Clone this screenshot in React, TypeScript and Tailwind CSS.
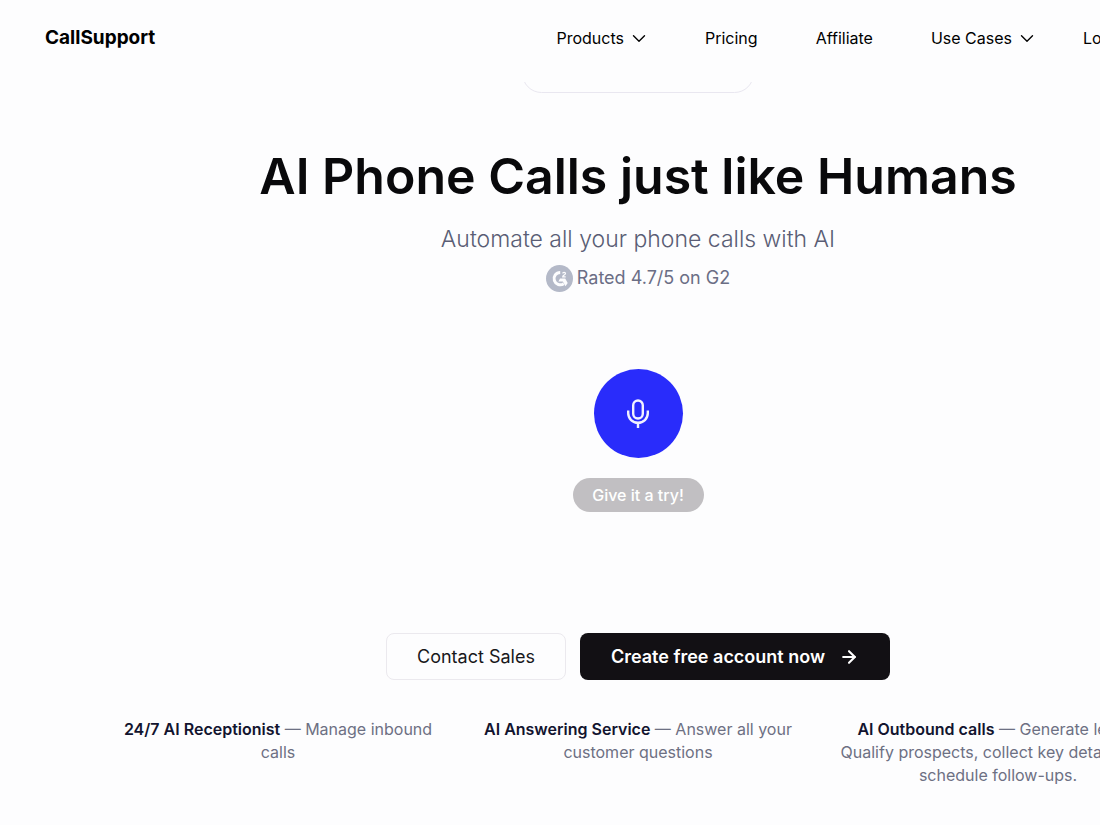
import { ArrowRight } from 'lucide-react';

const navLinks = [
  { label: 'Products', menu: true },
  { label: 'Pricing', menu: false },
  { label: 'Affiliate', menu: false },
  { label: 'Use Cases', menu: true },
];

const features = [
  { title: '24/7 AI Receptionist', text: 'Manage inbound calls' },
  { title: 'AI Answering Service', text: 'Answer all your customer questions' },
  {
    title: 'AI Outbound calls',
    text: 'Generate leads, Qualify prospects, collect key details, and schedule follow-ups.',
  },
];

function G2Logo() {
  return (
    <svg viewBox="0 0 27 27" className="h-[27px] w-[27px]" aria-hidden="true">
      <circle cx="13.5" cy="13.5" r="13.5" fill="#b4b9c8" />
      <path
        d="M14.2 7.4a6.2 6.2 0 1 0 3.6 11.3"
        fill="none"
        stroke="#fdfdfe"
        strokeWidth="3"
      />
      <path d="M14 13.6h5.2l2.5 4.4-2.2 3.2-2.7-4.7h-4.4z" fill="#fdfdfe" />
      <path
        d="M16.6 8.4c.3-1.5 2.9-1.4 2.9.2 0 1.3-2.8 1.7-2.8 3.2h3"
        fill="none"
        stroke="#fdfdfe"
        strokeWidth="1.2"
      />
    </svg>
  );
}

function MicIcon() {
  return (
    <svg
      viewBox="0 0 24 30"
      className="h-[30px] w-6"
      fill="none"
      stroke="#f1f1ff"
      strokeWidth="2.4"
      aria-hidden="true"
    >
      <rect x="7.2" y="1.5" width="9.6" height="18" rx="4.8" />
      <path d="M2.2 11.5v2.8a9.8 9.5 0 0 0 19.6 0v-2.8M12 24v5" />
    </svg>
  );
}

function Chevron() {
  return (
    <svg
      viewBox="0 0 16 16"
      className="h-4 w-4"
      fill="none"
      stroke="currentColor"
      strokeWidth="1.4"
      strokeLinecap="round"
      strokeLinejoin="round"
      aria-hidden="true"
    >
      <path d="M2.5 5.8 8 11.2l5.5-5.4" />
    </svg>
  );
}

function Header() {
  return (
    <header className="relative z-10 flex h-[82px] items-center bg-[#fdfdfe] px-[45px] pb-1.5 text-base text-black">
      <a href="#" className="text-[19px] font-bold">
        CallSupport
      </a>
      <nav className="ml-auto flex items-center gap-[58px]">
        {navLinks.map((link) => (
          <a key={link.label} href="#" className="flex items-center gap-[7px]">
            {link.label}
            {link.menu && <Chevron />}
          </a>
        ))}
      </nav>
      <div className="ml-12 w-[148px]">
        <a href="#">Login</a>
      </div>
    </header>
  );
}

export default function App() {
  return (
    <div className="min-h-screen overflow-x-hidden bg-[#fdfdfe] font-['Inter',sans-serif]">
      <div className="min-w-[1276px]">
        <Header />

        <main className="flex flex-col items-center text-center">
          {/* Announcement pill, tucked under the header */}
          <div className="-mt-7 h-[39px] w-[232px] rounded-[20px] border border-[#e9e7f0]"></div>

          {/* Hero */}
          <h1 className="mt-[51px] text-[50px] leading-16 font-semibold text-[#09090b]">
            AI Phone Calls just like Humans
          </h1>
          <p className="mt-[15px] text-[23px] leading-8 font-light text-[#5a5d75]">
            Automate all your phone calls with AI
          </p>
          <div className="mt-[7px] flex items-center gap-1 text-lg leading-8 text-[#6b6e85]">
            <G2Logo />
            <span>Rated 4.7/5 on G2</span>
          </div>

          {/* Voice demo */}
          <button
            type="button"
            aria-label="Start a call"
            className="mt-[75px] flex h-[89px] w-[89px] items-center justify-center rounded-full bg-[#292cfb]"
          >
            <MicIcon />
          </button>
          <button
            type="button"
            className="mt-5 h-[34px] w-[131px] rounded-full bg-[#c1bfc2] text-base font-medium text-white"
          >
            Give it a try!
          </button>

          {/* Action Buttons */}
          <div className="mt-[121px] flex gap-3.5">
            <button
              type="button"
              className="h-[47px] w-[180px] rounded-lg border border-[#ebe9ee] text-lg text-[#18181b]"
            >
              Contact Sales
            </button>
            <button
              type="button"
              className="flex h-[47px] w-[310px] items-center justify-center gap-3.5 rounded-lg bg-[#121014] text-lg font-semibold text-white"
            >
              Create free account now
              <ArrowRight className="h-5 w-5" strokeWidth={2.5} />
            </button>
          </div>

          {/* Features */}
          <div className="mt-[38px] grid w-[1048px] grid-cols-3 gap-8">
            {features.map((feature) => (
              <p key={feature.title} className="text-base leading-[23px] text-[#6d7083]">
                <strong className="font-semibold text-[#12142f]">{feature.title}</strong> —{' '}
                {feature.text}
              </p>
            ))}
          </div>
        </main>
      </div>
    </div>
  );
}
